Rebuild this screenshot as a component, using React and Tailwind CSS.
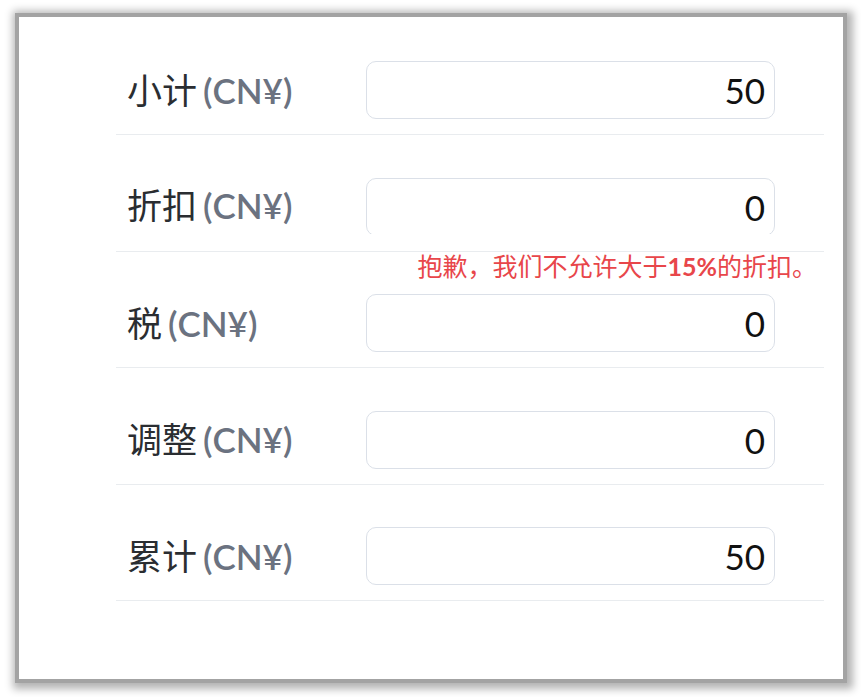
import React from 'react';

const rows = [
  { label: '小计', value: '50' },
  { label: '折扣', value: '0', error: true },
  { label: '税', value: '0' },
  { label: '调整', value: '0' },
  { label: '累计', value: '50' },
];

const font = { fontFamily: 'Lato, "Noto Sans CJK SC", sans-serif' };

const Row = ({ label, value, error }) => (
  <div
    className={`relative flex items-center border-b border-[#e9ecef] pt-[42.5px] pl-[11px] pr-[49px] ${
      error ? 'pb-[17px]' : 'pb-[15px]'
    }`}
  >
    <div className="w-[239px] shrink-0 text-[35px] leading-none text-[#2a2d31] whitespace-nowrap">
      {label}
      <span className="ml-[6px] font-semibold text-[#6b7280]">(CN¥)</span>
    </div>
    <div className={`flex-1 ${error ? 'h-[56px] overflow-hidden' : ''}`}>
      <input
        readOnly
        value={value}
        className="h-[58px] w-full rounded-[10px] border border-[#dbe0e8] bg-white pr-[9px] text-right text-[35px] text-[#111] outline-none"
        style={font}
      />
    </div>
    {error && (
      <div className="absolute right-[7px] top-[119px] text-[25px] leading-none text-[#e8464a] whitespace-nowrap">
        抱歉，我们不允许大于<span className="font-bold">15%</span>的折扣。
      </div>
    )}
  </div>
);

export default function App() {
  return (
    <div className="h-[697px] w-[861px] bg-white pt-[17px] pl-[19px]" style={font}>
      <div className="h-[662px] w-[824px] bg-white pt-[1.5px] pl-[97px] pr-[19px] shadow-[0_0_0_4px_#a3a3a3,2px_2px_8px_8px_rgba(0,0,0,0.3)]">
        {rows.map((r) => (
          <Row key={r.label} {...r} />
        ))}
      </div>
    </div>
  );
}
